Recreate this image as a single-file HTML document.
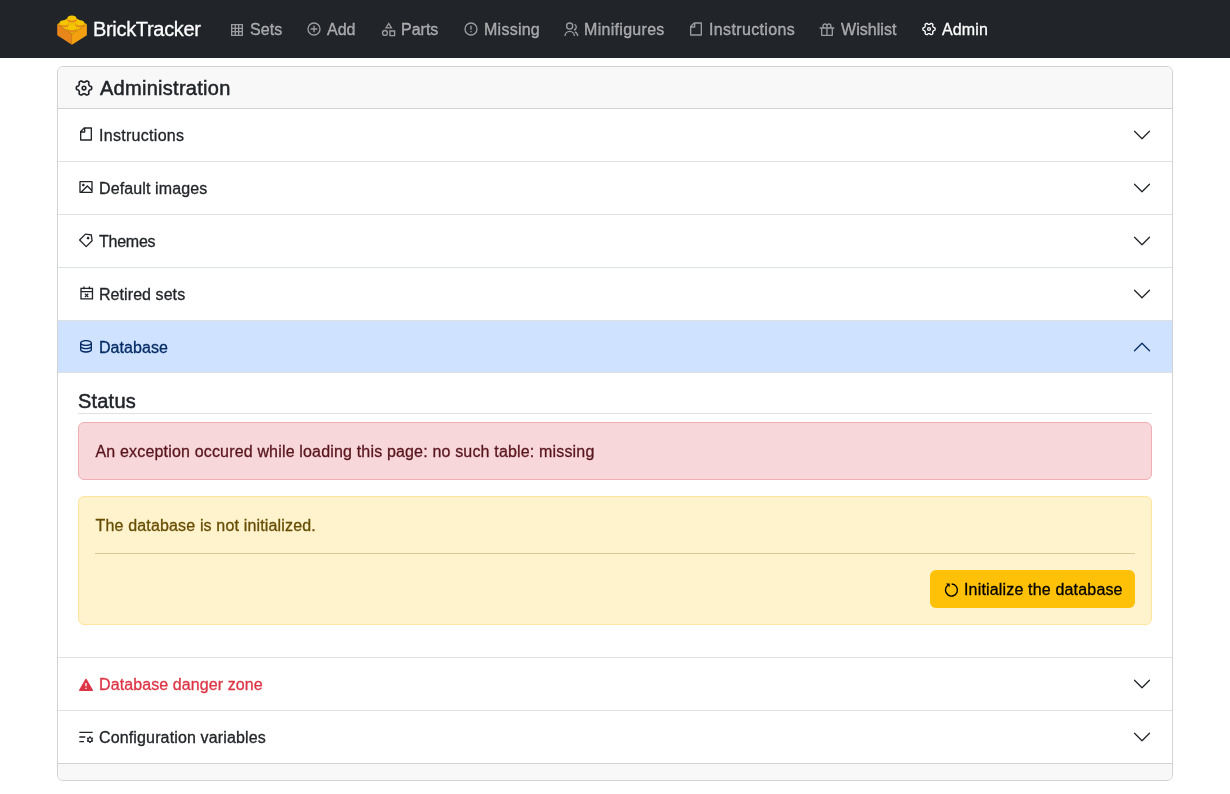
<!DOCTYPE html>
<html><head><meta charset="utf-8">
<style>
*{box-sizing:border-box;margin:0;padding:0}
html,body{width:1230px;height:794px;overflow:hidden;background:#fff}
body{font-family:"Liberation Sans",sans-serif;font-size:16px;line-height:24px;color:#212529;position:relative}
#root div{-webkit-text-stroke:0.3px currentColor}
#root{position:absolute;left:0;top:0;width:1230px;height:794px;background:#fff;will-change:transform;overflow:hidden}
.abs{position:absolute}
.ic{display:block;position:absolute;overflow:visible}
#nav{position:absolute;left:0;top:0;width:1230px;height:58px;background:#212529}
.nl{position:absolute;top:18px;height:24px;line-height:24px;white-space:nowrap;font-size:16px;letter-spacing:.05px}
#brand{position:absolute;left:93px;top:15px;line-height:28px;font-size:20px;color:#fff;white-space:nowrap;letter-spacing:-.32px}
#card{position:absolute;left:57px;top:66px;width:1116px;height:715px;border:1px solid rgba(0,0,0,.175);border-radius:6px}
.hl{position:absolute;left:58px;width:1114px;height:1px;background:#dee2e6}
.row{position:absolute;left:58px;width:1114px;height:52px}
.t{position:absolute;left:99px;white-space:nowrap;letter-spacing:.17px;line-height:24px}
.al{position:absolute;border:1px solid;border-radius:6px}
</style></head><body><div id="root">
<div id="nav">
  <svg class="ic" style="left:57px;top:15px" width="30" height="30" viewBox="0 0 30 30">
    <polygon points="0.2,9.3 14.9,0.8 29.9,9.3 14.9,18.8" fill="#f0c000"/>
    <polygon points="0.2,9.3 14.9,18.8 14.9,29.7 0.2,20.2" fill="#e8861c"/>
    <polygon points="14.9,18.8 29.9,9.3 29.9,20.2 14.9,29.7" fill="#f2a010"/>
    <ellipse cx="14.90" cy="4.70" rx="4.4" ry="2.6" fill="#e47e1e"/><rect x="10.50" y="3.10" width="8.8" height="1.60" fill="#e47e1e"/><ellipse cx="14.90" cy="3.10" rx="4.4" ry="2.6" fill="#f4c600"/><ellipse cx="7.00" cy="9.50" rx="4.4" ry="2.6" fill="#e47e1e"/><rect x="2.60" y="7.90" width="8.8" height="1.60" fill="#e47e1e"/><ellipse cx="7.00" cy="7.90" rx="4.4" ry="2.6" fill="#f4c600"/><ellipse cx="22.80" cy="9.50" rx="4.4" ry="2.6" fill="#e47e1e"/><rect x="18.40" y="7.90" width="8.8" height="1.60" fill="#e47e1e"/><ellipse cx="22.80" cy="7.90" rx="4.4" ry="2.6" fill="#f4c600"/><ellipse cx="14.90" cy="14.30" rx="4.4" ry="2.6" fill="#e47e1e"/><rect x="10.50" y="12.70" width="8.8" height="1.60" fill="#e47e1e"/><ellipse cx="14.90" cy="12.70" rx="4.4" ry="2.6" fill="#f4c600"/>
  </svg>
  <div id="brand">BrickTracker</div>
  <svg class="ic" style="left:228.7px;top:21.7px;color:rgba(255,255,255,.55)" width="16" height="16" viewBox="0 0 24 24"><path fill="none" stroke="currentColor" stroke-width="2" d="M4 4h16v16H4z M9.5 4v16 M14.5 4v16 M4 9.5h16 M4 14.5h16"/></svg>
  <div class="nl" style="left:250px;color:rgba(255,255,255,.55);letter-spacing:0.05px">Sets</div>
  <svg class="ic" style="left:305.9px;top:21.3px;color:rgba(255,255,255,.55)" width="16" height="16" viewBox="0 0 24 24"><circle cx="12" cy="12" r="9" fill="none" stroke="currentColor" stroke-width="2"/><path stroke="currentColor" stroke-width="2" d="M12 7v10 M7 12h10"/></svg>
  <div class="nl" style="left:327px;color:rgba(255,255,255,.55);letter-spacing:0px">Add</div>
  <svg class="ic" style="left:381.0px;top:21.3px;color:rgba(255,255,255,.55)" width="16" height="16" viewBox="0 0 24 24"><path fill="currentColor" fill-rule="evenodd" d="M11.6 1.7 L17.4 11.2 H5.8 Z M11.6 5.5 L9.1 9.3 H14.1 Z"/><circle cx="5.95" cy="17.9" r="3.65" fill="none" stroke="currentColor" stroke-width="2"/><path fill="none" stroke="currentColor" stroke-width="2" d="M13.4 15h7v7h-7z"/></svg>
  <div class="nl" style="left:401px;color:rgba(255,255,255,.55);letter-spacing:0px">Parts</div>
  <svg class="ic" style="left:462.9px;top:21.3px;color:rgba(255,255,255,.55)" width="16" height="16" viewBox="0 0 24 24"><circle cx="12" cy="12" r="9" fill="none" stroke="currentColor" stroke-width="2"/><path fill="currentColor" d="M11 7h2v6h-2z M11 15h2v2h-2z"/></svg>
  <div class="nl" style="left:484px;color:rgba(255,255,255,.55);letter-spacing:0.25px">Missing</div>
  <svg class="ic" style="left:563.0px;top:21.3px;color:rgba(255,255,255,.55)" width="16" height="16" viewBox="0 0 24 24"><circle cx="10" cy="7.6" r="4.6" fill="none" stroke="currentColor" stroke-width="2"/><path fill="none" stroke="currentColor" stroke-width="2" d="M3 22.6 a7 7 0 0 1 14 0 M17.3 4.9 a4.6 4.6 0 0 1 -0.8 8.6 M17.9 16.2 a7 7 0 0 1 4.1 6.4"/></svg>
  <div class="nl" style="left:584px;color:rgba(255,255,255,.55);letter-spacing:0.3px">Minifigures</div>
  <svg class="ic" style="left:688.4px;top:21.3px;color:rgba(255,255,255,.55)" width="16" height="16" viewBox="0 0 24 24"><path fill="currentColor" d="M9 2.00318V2H19.9978C20.5513 2 21 2.45531 21 2.9918V21.0082C21 21.556 20.5551 22 20.0066 22H3.9934C3.44476 22 3 21.5501 3 20.9932V8L9 2.00318ZM5.82918 8H9V4.83086L5.82918 8ZM11 4V9C11 9.55228 10.5523 10 10 10H5V20H19V4H11Z"/></svg>
  <div class="nl" style="left:709px;color:rgba(255,255,255,.55);letter-spacing:0.36px">Instructions</div>
  <svg class="ic" style="left:819.3px;top:22.2px;color:rgba(255,255,255,.55)" width="16" height="16" viewBox="0 0 24 24"><path fill="currentColor" d="M15.0049 2.00281C17.214 2.00281 19.0049 3.79367 19.0049 6.00281C19.0049 6.73184 18.8098 7.41532 18.4691 8.00392L23.0049 8.00281V10.0028H21.0049V20.0028C21.0049 20.5551 20.5572 21.0028 20.0049 21.0028H4.00488C3.4526 21.0028 3.00488 20.5551 3.00488 20.0028V10.0028H1.00488V8.00281L5.54065 8.00392C5.19992 7.41532 5.00488 6.73184 5.00488 6.00281C5.00488 3.79367 6.79574 2.00281 9.00488 2.00281C10.2001 2.00281 11.2729 2.52702 12.0058 3.35807C12.7369 2.52702 13.8097 2.00281 15.0049 2.00281ZM11.0049 10.0028H5.00488V19.0028H11.0049V10.0028ZM19.0049 10.0028H13.0049V19.0028H19.0049V10.0028ZM9.00488 4.00281C7.90031 4.00281 7.00488 4.89824 7.00488 6.00281C7.00488 7.05717 7.82076 7.92097 8.85562 7.99732L9.00488 8.00281H11.0049V6.00281C11.0049 5.00116 10.2686 4.1715 9.30766 4.02558L9.15415 4.00829L9.00488 4.00281ZM15.0049 4.00281C13.9505 4.00281 13.0867 4.81869 13.0104 5.85355L13.0049 6.00281V8.00281H15.0049C16.0592 8.00281 16.923 7.18693 16.9994 6.15207L17.0049 6.00281C17.0049 4.89824 16.1095 4.00281 15.0049 4.00281Z"/></svg>
  <div class="nl" style="left:841px;color:rgba(255,255,255,.55);letter-spacing:0.05px">Wishlist</div>
  <svg class="ic" style="left:921.2px;top:21.3px;color:#fff" width="16" height="16" viewBox="0 0 24 24"><path fill="none" stroke="currentColor" stroke-width="2" stroke-linejoin="round" d="M21.20 12.00 L21.17 11.40 L21.05 10.81 L20.70 10.27 L19.82 9.90 L18.94 9.65 L18.53 9.29 L18.29 8.90 L18.06 8.50 L17.83 8.11 L17.61 7.70 L17.51 7.17 L17.73 6.27 L17.85 5.33 L17.56 4.76 L17.11 4.36 L16.60 4.03 L16.06 3.76 L15.49 3.56 L14.85 3.60 L14.10 4.18 L13.43 4.82 L12.92 4.99 L12.46 5.00 L12.00 5.00 L11.54 5.00 L11.08 4.99 L10.57 4.82 L9.90 4.18 L9.15 3.60 L8.51 3.56 L7.94 3.76 L7.40 4.03 L6.89 4.36 L6.44 4.76 L6.15 5.33 L6.27 6.27 L6.49 7.17 L6.39 7.70 L6.17 8.11 L5.94 8.50 L5.71 8.90 L5.47 9.29 L5.06 9.65 L4.18 9.90 L3.30 10.27 L2.95 10.81 L2.83 11.40 L2.80 12.00 L2.83 12.60 L2.95 13.19 L3.30 13.73 L4.18 14.10 L5.06 14.35 L5.47 14.71 L5.71 15.10 L5.94 15.50 L6.17 15.89 L6.39 16.30 L6.49 16.83 L6.27 17.73 L6.15 18.67 L6.44 19.24 L6.89 19.64 L7.40 19.97 L7.94 20.24 L8.51 20.44 L9.15 20.40 L9.90 19.82 L10.57 19.18 L11.08 19.01 L11.54 19.00 L12.00 19.00 L12.46 19.00 L12.92 19.01 L13.43 19.18 L14.10 19.82 L14.85 20.40 L15.49 20.44 L16.06 20.24 L16.60 19.97 L17.11 19.64 L17.56 19.24 L17.85 18.67 L17.73 17.73 L17.51 16.83 L17.61 16.30 L17.83 15.89 L18.06 15.50 L18.29 15.10 L18.53 14.71 L18.94 14.35 L19.82 14.10 L20.70 13.73 L21.05 13.19 L21.17 12.60Z"/><circle cx="12" cy="12" r="2.2" fill="none" stroke="currentColor" stroke-width="1.9"/></svg>
  <div class="nl" style="left:942px;color:#fff;letter-spacing:0.15px">Admin</div>
</div>

<div id="card"></div>
<div class="abs" style="left:58px;top:67px;width:1114px;height:41px;background:#f8f8f8;border-radius:5px 5px 0 0"></div>
<div class="abs" style="left:58px;top:108px;width:1114px;height:1px;background:#d2d2d2"></div>
<svg class="ic" style="left:74.4px;top:78.0px" width="20" height="20" viewBox="0 0 24 24"><path fill="none" stroke="currentColor" stroke-width="2" stroke-linejoin="round" d="M21.20 12.00 L21.17 11.40 L21.05 10.81 L20.70 10.27 L19.82 9.90 L18.94 9.65 L18.53 9.29 L18.29 8.90 L18.06 8.50 L17.83 8.11 L17.61 7.70 L17.51 7.17 L17.73 6.27 L17.85 5.33 L17.56 4.76 L17.11 4.36 L16.60 4.03 L16.06 3.76 L15.49 3.56 L14.85 3.60 L14.10 4.18 L13.43 4.82 L12.92 4.99 L12.46 5.00 L12.00 5.00 L11.54 5.00 L11.08 4.99 L10.57 4.82 L9.90 4.18 L9.15 3.60 L8.51 3.56 L7.94 3.76 L7.40 4.03 L6.89 4.36 L6.44 4.76 L6.15 5.33 L6.27 6.27 L6.49 7.17 L6.39 7.70 L6.17 8.11 L5.94 8.50 L5.71 8.90 L5.47 9.29 L5.06 9.65 L4.18 9.90 L3.30 10.27 L2.95 10.81 L2.83 11.40 L2.80 12.00 L2.83 12.60 L2.95 13.19 L3.30 13.73 L4.18 14.10 L5.06 14.35 L5.47 14.71 L5.71 15.10 L5.94 15.50 L6.17 15.89 L6.39 16.30 L6.49 16.83 L6.27 17.73 L6.15 18.67 L6.44 19.24 L6.89 19.64 L7.40 19.97 L7.94 20.24 L8.51 20.44 L9.15 20.40 L9.90 19.82 L10.57 19.18 L11.08 19.01 L11.54 19.00 L12.00 19.00 L12.46 19.00 L12.92 19.01 L13.43 19.18 L14.10 19.82 L14.85 20.40 L15.49 20.44 L16.06 20.24 L16.60 19.97 L17.11 19.64 L17.56 19.24 L17.85 18.67 L17.73 17.73 L17.51 16.83 L17.61 16.30 L17.83 15.89 L18.06 15.50 L18.29 15.10 L18.53 14.71 L18.94 14.35 L19.82 14.10 L20.70 13.73 L21.05 13.19 L21.17 12.60Z"/><circle cx="12" cy="12" r="2.2" fill="none" stroke="currentColor" stroke-width="1.9"/></svg>
<div class="abs" style="left:100px;top:76px;font-size:20px;line-height:24px;white-space:nowrap;letter-spacing:.28px;-webkit-text-stroke:.5px currentColor">Administration</div>

<div class="row" style="top:109px"></div>
<svg class="ic" style="left:77.89999999999999px;top:126.10000000000001px" width="16" height="16" viewBox="0 0 24 24"><path fill="currentColor" d="M9 2.00318V2H19.9978C20.5513 2 21 2.45531 21 2.9918V21.0082C21 21.556 20.5551 22 20.0066 22H3.9934C3.44476 22 3 21.5501 3 20.9932V8L9 2.00318ZM5.82918 8H9V4.83086L5.82918 8ZM11 4V9C11 9.55228 10.5523 10 10 10H5V20H19V4H11Z"/></svg>
<div class="t" style="top:124px;letter-spacing:0.29px">Instructions</div>
<svg class="ic" style="left:1132px;top:125px;color:#212529" width="20" height="20" viewBox="0 0 16 16"><path fill="none" stroke="currentColor" stroke-width="1" stroke-linecap="round" stroke-linejoin="round" d="M2 5L8 11L14 5"/></svg>
<div class="hl" style="top:161px"></div>
<div class="row" style="top:162px"></div>
<svg class="ic" style="left:78.0px;top:179.4px" width="16" height="16" viewBox="0 0 24 24"><path fill="currentColor" d="M2.9918 21C2.44405 21 2 20.5551 2 20.0066V3.9934C2 3.44476 2.45531 3 2.9918 3H21.0082C21.556 3 22 3.44495 22 3.9934V20.0066C22 20.5552 21.5447 21 21.0082 21H2.9918ZM20 15V5H4V19L14 9L20 15ZM20 17.8284L14 11.8284L6.82843 19H20V17.8284ZM8 11C6.89543 11 6 10.1046 6 9C6 7.89543 6.89543 7 8 7C9.10457 7 10 7.89543 10 9C10 10.1046 9.10457 11 8 11Z"/></svg>
<div class="t" style="top:177px;letter-spacing:0.12px">Default images</div>
<svg class="ic" style="left:1132px;top:178px;color:#212529" width="20" height="20" viewBox="0 0 16 16"><path fill="none" stroke="currentColor" stroke-width="1" stroke-linecap="round" stroke-linejoin="round" d="M2 5L8 11L14 5"/></svg>
<div class="hl" style="top:214px"></div>
<div class="row" style="top:215px"></div>
<svg class="ic" style="left:78.0px;top:232.1px" width="16" height="16" viewBox="0 0 24 24"><path fill="currentColor" d="M10.9042 2.1001L20.8037 3.51431L22.2179 13.4138L13.0255 22.6062C12.635 22.9967 12.0019 22.9967 11.6113 22.6062L1.71184 12.7067C1.32131 12.3162 1.32131 11.683 1.71184 11.2925L10.9042 2.1001ZM11.6113 4.22142L3.83316 11.9996L12.3184 20.4849L20.0966 12.7067L19.036 5.28208L11.6113 4.22142ZM13.7327 10.5854C12.9516 9.80433 12.9516 8.538 13.7327 7.75695C14.5137 6.9759 15.78 6.9759 16.5611 7.75695C17.3421 8.538 17.3421 9.80433 16.5611 10.5854C15.78 11.3664 14.5137 11.3664 13.7327 10.5854Z"/></svg>
<div class="t" style="top:230px;letter-spacing:-0.25px">Themes</div>
<svg class="ic" style="left:1132px;top:231px;color:#212529" width="20" height="20" viewBox="0 0 16 16"><path fill="none" stroke="currentColor" stroke-width="1" stroke-linecap="round" stroke-linejoin="round" d="M2 5L8 11L14 5"/></svg>
<div class="hl" style="top:267px"></div>
<div class="row" style="top:268px"></div>
<svg class="ic" style="left:78.6px;top:286.4px" width="16" height="16" viewBox="0 0 24 24"><path fill="none" stroke="currentColor" stroke-width="2" d="M3 3.6H20.2V19.2H3Z M3 8.4H20.2 M7.4 0.6V4.7 M15.6 0.6V4.7"/><path fill="none" stroke="currentColor" stroke-width="1.8" d="M8.9 11.6 l5 5 M13.9 11.6 l-5 5"/></svg>
<div class="t" style="top:283px;letter-spacing:0.07px">Retired sets</div>
<svg class="ic" style="left:1132px;top:284px;color:#212529" width="20" height="20" viewBox="0 0 16 16"><path fill="none" stroke="currentColor" stroke-width="1" stroke-linecap="round" stroke-linejoin="round" d="M2 5L8 11L14 5"/></svg>
<div class="hl" style="top:320px"></div>

<!-- Database (open) -->
<div class="abs" style="left:58px;top:321px;width:1114px;height:52px;background:#cfe2ff;box-shadow:inset 0 -1px 0 #dee2e6"></div>
<svg class="ic" style="left:77.85px;top:338.4px;color:#052c65" width="16" height="16" viewBox="0 0 24 24"><path fill="currentColor" d="M5 12.5C5 12.8134 5.46101 13.3584 6.53047 13.8931C7.91405 14.5849 9.87677 15 12 15C14.1232 15 16.0859 14.5849 17.4695 13.8931C18.539 13.3584 19 12.8134 19 12.5V10.3287C17.35 11.3482 14.8273 12 12 12C9.17273 12 6.64996 11.3482 5 10.3287V12.5ZM19 15.3287C17.35 16.3482 14.8273 17 12 17C9.17273 17 6.64996 16.3482 5 15.3287V17.5C5 17.8134 5.46101 18.3584 6.53047 18.8931C7.91405 19.5849 9.87677 20 12 20C14.1232 20 16.0859 19.5849 17.4695 18.8931C18.539 18.3584 19 17.8134 19 17.5V15.3287ZM3 17.5V7.5C3 5.01472 7.02944 3 12 3C16.9706 3 21 5.01472 21 7.5V17.5C21 19.9853 16.9706 22 12 22C7.02944 22 3 19.9853 3 17.5ZM12 10C14.1232 10 16.0859 9.58492 17.4695 8.89313C18.539 8.3584 19 7.81342 19 7.5C19 7.18658 18.539 6.6416 17.4695 6.10687C16.0859 5.41508 14.1232 5 12 5C9.87677 5 7.91405 5.41508 6.53047 6.10687C5.46101 6.6416 5 7.18658 5 7.5C5 7.81342 5.46101 8.3584 6.53047 8.89313C7.91405 9.58492 9.87677 10 12 10Z"/></svg>
<div class="t" style="top:336px;color:#052c65;letter-spacing:.07px">Database</div>
<svg class="ic" style="left:1132px;top:337px;color:#052c65;transform:rotate(180deg)" width="20" height="20" viewBox="0 0 16 16"><path fill="none" stroke="currentColor" stroke-width="1" stroke-linecap="round" stroke-linejoin="round" d="M2 5L8 11L14 5"/></svg>

<div class="abs" style="left:78px;top:389px;width:1074px;height:25px;border-bottom:1px solid #dee2e6"></div>
<div class="abs" style="left:78px;top:389px;font-size:20px;line-height:24px;white-space:nowrap;letter-spacing:.2px;-webkit-text-stroke:.5px currentColor">Status</div>

<div class="al" style="left:78px;top:422px;width:1074px;height:58px;background:#f8d7da;border-color:#f1aeb5"></div>
<div class="abs" style="left:95.5px;top:440px;color:#58151c;white-space:nowrap;letter-spacing:.17px">An exception occured while loading this page: no such table: missing</div>

<div class="al" style="left:78px;top:496px;width:1074px;height:129px;background:#fff3cd;border-color:#ffe69c"></div>
<div class="abs" style="left:95.5px;top:514px;color:#664d03;white-space:nowrap;letter-spacing:.16px">The database is not initialized.</div>
<div class="abs" style="left:95px;top:553px;width:1040px;height:1px;background:#d9ca9b"></div>
<div class="abs" style="left:930px;top:570px;width:205px;height:38px;background:#ffc107;border-radius:6px"></div>
<svg class="ic" style="left:942.7px;top:581.6px;color:#000" width="16" height="16" viewBox="0 0 24 24"><path fill="none" stroke="currentColor" stroke-width="2" d="M13 3.05 A9 9 0 1 1 7.2 4.9"/><path fill="currentColor" d="M4.6 2.4 H10.0 V7.8 Z"/></svg>
<div class="abs" style="left:964px;top:578px;color:#000;white-space:nowrap;letter-spacing:.17px">Initialize the database</div>

<div class="hl" style="top:657px"></div>
<svg class="ic" style="left:77.8px;top:677.0px;color:#dc3545" width="16" height="16" viewBox="0 0 24 24"><path fill="currentColor" d="M12.8659 3.00017L22.3922 19.5002C22.6684 19.9785 22.5045 20.5901 22.0262 20.8662C21.8742 20.954 21.7017 21.0002 21.5262 21.0002H2.47363C1.92135 21.0002 1.47363 20.5525 1.47363 20.0002C1.47363 19.8246 1.51984 19.6522 1.60761 19.5002L11.1339 3.00017C11.41 2.52187 12.0216 2.358 12.4999 2.63414C12.6519 2.72191 12.7782 2.84815 12.8659 3.00017ZM10.9999 16.0002V18.0002H12.9999V16.0002H10.9999ZM10.9999 9.00017V14.0002H12.9999V9.00017H10.9999Z"/></svg>
<div class="t" style="top:673px;color:#dc3545;letter-spacing:.09px">Database danger zone</div>
<svg class="ic" style="left:1132px;top:674px;color:#212529" width="20" height="20" viewBox="0 0 16 16"><path fill="none" stroke="currentColor" stroke-width="1" stroke-linecap="round" stroke-linejoin="round" d="M2 5L8 11L14 5"/></svg>
<div class="hl" style="top:710px"></div>
<svg class="ic" style="left:77.7px;top:729.4px" width="16" height="16" viewBox="0 0 24 24"><path fill="currentColor" d="M2 18H9V20H2V18ZM2 11H11V13H2V11ZM2 4H22V6H2V4ZM20.674 13.0251L21.8301 12.634L22.8301 14.366L21.914 15.1711C22.0288 15.7194 22.0288 16.2806 21.914 16.8289L22.8301 17.634L21.8301 19.366L20.674 18.9749C20.2635 19.3441 19.7763 19.6314 19.2391 19.8026L19 21H17L16.7609 19.8026C16.2237 19.6314 15.7365 19.3441 15.326 18.9749L14.1699 19.366L13.1699 17.634L14.086 16.8289C13.9712 16.2806 13.9712 15.7194 14.086 15.1711L13.1699 14.366L14.1699 12.634L15.326 13.0251C15.7365 12.6559 16.2237 12.3686 16.7609 12.1974L17 11H19L19.2391 12.1974C19.7763 12.3686 20.2635 12.6559 20.674 13.0251ZM18 18C19.1046 18 20 17.1046 20 16C20 14.8954 19.1046 14 18 14C16.8954 14 16 14.8954 16 16C16 17.1046 16.8954 18 18 18Z"/></svg>
<div class="t" style="top:726px;letter-spacing:.14px">Configuration variables</div>
<svg class="ic" style="left:1132px;top:727px;color:#212529" width="20" height="20" viewBox="0 0 16 16"><path fill="none" stroke="currentColor" stroke-width="1" stroke-linecap="round" stroke-linejoin="round" d="M2 5L8 11L14 5"/></svg>
<div class="abs" style="left:58px;top:763px;width:1114px;height:17px;background:#f8f8f8;border-top:1px solid #d2d2d2;border-radius:0 0 5px 5px"></div>
</div></body></html>
